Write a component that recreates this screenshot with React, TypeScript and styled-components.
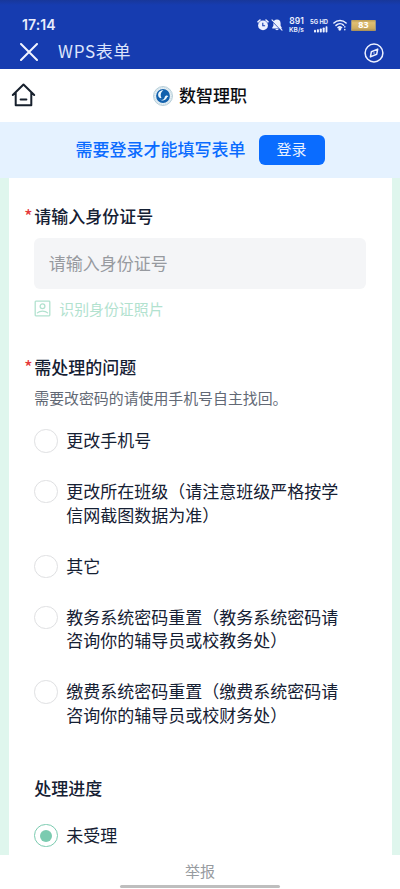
import React from "react";
import styled, { createGlobalStyle, css } from "styled-components";

const GlobalStyle = createGlobalStyle`
  *, *::before, *::after { box-sizing: border-box; }
  html, body { margin: 0; padding: 0; background: #fff; }
  body {
    font-family: "Noto Sans CJK SC", "Noto Sans", sans-serif;
    font-size: 17px;
    color: #152033;
    overflow: hidden;
  }
  h1, h2, p { margin: 0; font-weight: inherit; }
  button { font-family: inherit; border: 0; padding: 0; background: none; cursor: pointer; }
  svg { display: block; flex: none; }
`;

const Screen = styled.div`
  width: 400px;
  height: 889px;
  display: flex;
  flex-direction: column;
  background: #fff;
`;

const TopArea = styled.div`
  height: 69px;
  flex: none;
  color: #fff;
  background: linear-gradient(#18379a 0, #163cb0 5px, #163cb0 100%);
`;

const StatusBar = styled.div`
  height: 34px;
  padding: 15px 24px 0 22px;
  display: flex;
  justify-content: space-between;
`;

const Clock = styled.span`
  font: 600 14px/19px Inter, "Noto Sans", sans-serif;
  letter-spacing: 0.1px;
  color: #e9edfc;
`;

const StatusIcons = styled.div`
  display: flex;
  align-items: center;
  height: 20px;
  color: #edf1ff;
`;

const NetSpeed = styled.div`
  width: 17px;
  margin-left: 5px;
  display: flex;
  flex-direction: column;
  align-items: center;
  white-space: nowrap;
`;

const SpeedValue = styled.span`
  font: 600 8.500px/9px Inter, sans-serif;
`;

const SpeedUnit = styled.span`
  font: 600 6.500px/8px Inter, sans-serif;
`;

const Signal = styled.div`
  width: 18px;
  margin: 0 5px 0 5px;
  display: flex;
  flex-direction: column;
  align-items: flex-end;
  font: 700 5.800px/8px Inter, sans-serif;
  white-space: nowrap;
`;

const Battery = styled.div`
  width: 25px;
  height: 11px;
  margin-left: 4px;
  display: grid;
  place-items: center;
  border-radius: 1px;
  border: solid #9b9787;
  border-width: 0 1px;
  background: linear-gradient(#b99b55, #dfbf73 25%, #cfad60 75%, #a78e58);
  color: #fff;
  font: 700 9px/10px "Noto Sans", sans-serif;
`;

const AppBar = styled.header`
  height: 35px;
  padding: 0 16px 0 20px;
  display: flex;
  align-items: center;
`;

const AppTitle = styled.h1`
  flex: 1;
  margin: -1px 0 0 20px;
  font-size: 17px;
  line-height: 24px;
  letter-spacing: 0.7px;
  color: #dde5fc;
`;

const CompassButton = styled.button`
  color: #edf1ff;
  margin-top: 3px;
`;

const CloseButton = styled.button`
  color: #f1f4ff;
`;

const BrandBar = styled.div`
  height: 53px;
  flex: none;
  display: grid;
  grid-template-columns: 1fr auto 1fr;
  align-items: center;
  padding: 0 11px;
`;

const Brand = styled.div`
  display: flex;
  align-items: center;
  gap: 6px;
  font-weight: 500;
  line-height: 24px;
  color: #0b0d12;
`;

const BrandName = styled.span`
  margin-top: -2px;
`;

const LoginBanner = styled.div`
  height: 56px;
  flex: none;
  display: flex;
  align-items: center;
  justify-content: center;
  gap: 13px;
  background: #e5f2ff;
  color: #0a6bff;
  font-weight: 500;
  line-height: 24px;
`;

const LoginPrompt = styled.span`
  margin-top: -2px;
`;

const LoginButton = styled.button`
  width: 66px;
  height: 30px;
  border-radius: 6px;
  background: #0a6cff;
  color: #e9f2ff;
  font-size: 15px;
  line-height: 28px;
  padding-bottom: 2px;
`;

const FormArea = styled.main`
  height: 677px;
  flex: none;
  padding: 0 8.5px;
  background: #dff6ed;
  overflow: hidden;
`;

const FormCard = styled.div`
  height: 100%;
  padding: 26px 25.5px 0 25.8px;
  background: #fff;
`;

const Question = styled.section<{ $gap?: number }>`
  margin-top: ${(p) => p.$gap ?? 0}px;
`;

const QuestionTitle = styled.h2<{ $required?: boolean }>`
  font-size: 17px;
  line-height: 24px;
  font-weight: 500;
  ${(p) =>
    p.$required &&
    css`
      margin-left: -10px;
      &::before {
        content: "*";
        display: inline-block;
        width: 10px;
        color: #e5383b;
        font-weight: 500;
      }
    `}
`;

const IdInput = styled.input`
  display: block;
  width: 332px;
  height: 51px;
  margin-top: 10px;
  padding: 0 14.5px 2px;
  border: 0;
  border-radius: 6px;
  background: #f4f5f7;
  font: 400 17px/24px "Noto Sans CJK SC", sans-serif;
  &::placeholder { color: #979a9f; opacity: 1; }
`;

const ScanLink = styled.button`
  margin: 9px 0 0 0;
  display: flex;
  align-items: center;
  gap: 8px;
  color: #b2e2cf;
  font-size: 14.9px;
  line-height: 21px;
`;

const Hint = styled.p`
  margin-top: 8px;
  font-size: 14.9px;
  line-height: 21px;
  color: #626975;
`;

const OptionList = styled.div`
  display: flex;
  flex-direction: column;
  gap: 27.4px;
`;

const Option = styled.label`
  display: flex;
  align-items: flex-start;
  gap: 8.5px;
  line-height: 23.6px;
`;

const OptionText = styled.span`
  width: 276px;
  margin-top: -0.5px;
  margin-bottom: 0.5px;
  white-space: pre-line;
`;

const RadioMark = styled.span<{ $checked?: boolean }>`
  width: 23.5px;
  height: 23.5px;
  margin-top: 0.5px;
  margin-bottom: -0.5px;
  flex: none;
  display: grid;
  place-items: center;
  border-radius: 50%;
  border: 1px solid ${(p) => (p.$checked ? "#7bcbb0" : "#dfe0e2")};
  &::after {
    content: "";
    width: 12px;
    height: 12px;
    border-radius: 50%;
    background: ${(p) => (p.$checked ? "#7bcbb0" : "transparent")};
  }
`;

const Footer = styled.footer`
  flex: 1;
  display: flex;
  flex-direction: column;
  align-items: center;
  padding-top: 5px;
  font-size: 15px;
  line-height: 22px;
  color: #979b9f;
`;

const HomeIndicator = styled.div`
  width: 160px;
  height: 3px;
  margin-top: 3px;
  border-radius: 2px;
  background: #bebebe;
`;

const AlarmIcon = () => (
  <svg width="12" height="12" viewBox="0 0 12 12" fill="none">
    <path d="M1 2.8 3 1M11 2.8 9 1" stroke="currentColor" strokeWidth="1.6" strokeLinecap="round" />
    <circle cx="6" cy="6.4" r="4.9" fill="currentColor" />
    <path d="M5.8 3.8v3h2.3" stroke="#163cb0" strokeWidth="1.1" />
  </svg>
);

const MutedBell = styled.svg`
  margin-left: 2px;
`;

const MutedBellIcon = () => (
  <MutedBell width="12" height="12" viewBox="0 0 12 12" fill="none">
    <path d="M6 .6c-2.300 0-3.600 1.700-3.600 3.800v2.400L1.300 8.500v.9h9.400v-.9L9.600 6.800V4.400C9.600 2.300 8.300.6 6 .6ZM4.300 10.100c.5 1.500 2.900 1.500 3.400 0Z" fill="currentColor" />
    <path d="M.8 1.900 10 11.300" stroke="#163cb0" strokeWidth="1" />
    <path d="m1 .8 10 10.300" stroke="currentColor" strokeWidth="1.100" strokeLinecap="round" />
  </MutedBell>
);

const SignalBars = () => (
  <svg width="14" height="7" viewBox="0 0 14 7" fill="currentColor">
    <rect x="0" y="3.8" width="2" height="2.7" rx=".7" />
    <rect x="2.9" y="3.3" width="2" height="3.2" rx=".7" />
    <rect x="5.8" y="2.5" width="2" height="4" rx=".7" />
    <rect x="8.7" y="1.5" width="2" height="5" rx=".7" />
    <rect x="11.6" y=".3" width="1.8" height="6.2" rx=".7" />
  </svg>
);

const WifiIcon = () => (
  <svg width="14" height="12" viewBox="0 0 14 12" fill="none" stroke="currentColor" strokeWidth="1.5" strokeLinecap="round">
    <path d="M.9 4c3.5-3.3 8.7-3.3 12.2 0M3 6.4c2.3-2.1 5.6-2.1 7.6-.2M5 8.6c1.1-.9 2.5-.9 3.6 0" />
    <circle cx="6.8" cy="10.2" r=".7" fill="currentColor" />
    <path d="M11.8 7.8v.3M11.8 10.6v.2" />
  </svg>
);

const CloseIcon = () => (
  <svg width="18" height="18" viewBox="0 0 18 18" stroke="currentColor" strokeWidth="2" strokeLinecap="round">
    <path d="m1 1 16 16M17 1 1 17" />
  </svg>
);

const CompassIcon = () => (
  <svg width="20" height="20" viewBox="0 0 20 20" fill="none" stroke="currentColor" strokeWidth="1.500" strokeLinejoin="round">
    <circle cx="10" cy="10" r="8.900" />
    <path d="m13.700 6.100-1 5.200-6.300 2.600 1-5.200Z" />
    <circle cx="10" cy="10" r=".7" fill="currentColor" stroke="none" />
  </svg>
);

const HomeIcon = () => (
  <svg width="25" height="25" viewBox="0 0 25 25" fill="none" stroke="#17202d" strokeWidth="2" strokeLinecap="round" strokeLinejoin="round">
    <path d="M1.800 12 12.500 1.500 23.200 12M4.700 9.700v12.500h15.600V9.700M9.600 16.600h5.800" />
  </svg>
);

const SchoolLogo = () => (
  <svg width="20" height="20" viewBox="0 0 20 20">
    <circle cx="10" cy="10" r="9.5" fill="#e7f0f5" stroke="#9dbdcc" strokeWidth=".7" />
    <circle cx="10" cy="10" r="8.300" fill="none" stroke="#b9d0da" strokeWidth=".8" strokeDasharray="1 1" />
    <circle cx="10" cy="10" r="6.900" fill="#1261ad" />
    <path d="M10.500 4.300c-3.300-.2-5.800 2.300-5.300 5.100.3 1.900 1.800 3 3.300 2.700C7.200 9.600 7.500 6.100 10.500 4.300Z" fill="#edf7fd" />
    <path d="M7 13.600c2.100.9 3.600.1 4.300-1.300.5-1 .3-1.900 1.200-2.400.9-.6 2.300-.3 3 .5-1.200-.1-1.400.7-1.800 1.700-1.100 2.500-4.700 3.400-6.700 1.500Z" fill="#edf7fd" />
  </svg>
);

const IdPhotoIcon = () => (
  <svg width="17" height="17" viewBox="0 0 17 17" fill="none" stroke="currentColor" strokeWidth="1.300">
    <rect x="1.200" y="1.200" width="14.600" height="14.600" rx=".7" />
    <circle cx="8.500" cy="6.300" r="2.400" />
    <path d="M3.400 12.900c2.400-2.400 7.900-2.400 10.200 0" strokeLinecap="round" />
  </svg>
);

const ISSUES = [
  "更改手机号",
  "更改所在班级（请注意班级严格按学\n信网截图数据为准）",
  "其它",
  "教务系统密码重置（教务系统密码请\n咨询你的辅导员或校教务处）",
  "缴费系统密码重置（缴费系统密码请\n咨询你的辅导员或校财务处）",
];

const IssueOptions = styled(OptionList)`
  margin-top: 20.5px;
`;

const ProgressOptions = styled(OptionList)`
  margin-top: 23.5px;
`;

export default function App() {
  return (
    <Screen>
      <GlobalStyle />
      <TopArea>
        <StatusBar>
          <Clock>17:14</Clock>
          <StatusIcons>
            <AlarmIcon />
            <MutedBellIcon />
            <NetSpeed>
              <SpeedValue>891</SpeedValue>
              <SpeedUnit>KB/s</SpeedUnit>
            </NetSpeed>
            <Signal>
              5G HD
              <SignalBars />
            </Signal>
            <WifiIcon />
            <Battery>83</Battery>
          </StatusIcons>
        </StatusBar>
        <AppBar>
          <CloseButton aria-label="关闭"><CloseIcon /></CloseButton>
          <AppTitle>WPS表单</AppTitle>
          <CompassButton aria-label="浏览器"><CompassIcon /></CompassButton>
        </AppBar>
      </TopArea>
      <BrandBar>
        <HomeIcon />
        <Brand>
          <SchoolLogo />
          <BrandName>数智理职</BrandName>
        </Brand>
      </BrandBar>
      <LoginBanner>
        <LoginPrompt>需要登录才能填写表单</LoginPrompt>
        <LoginButton>登录</LoginButton>
      </LoginBanner>
      <FormArea>
        <FormCard>
          <Question>
            <QuestionTitle $required>请输入身份证号</QuestionTitle>
            <IdInput placeholder="请输入身份证号" />
            <ScanLink>
              <IdPhotoIcon />
              识别身份证照片
            </ScanLink>
          </Question>
          <Question $gap={36}>
            <QuestionTitle $required>需处理的问题</QuestionTitle>
            <Hint>需要改密码的请使用手机号自主找回。</Hint>
            <IssueOptions>
              {ISSUES.map((text) => (
                <Option key={text}>
                  <RadioMark />
                  <OptionText>{text}</OptionText>
                </Option>
              ))}
            </IssueOptions>
          </Question>
          <Question $gap={49}>
            <QuestionTitle>处理进度</QuestionTitle>
            <ProgressOptions>
              <Option>
                <RadioMark $checked />
                <OptionText>未受理</OptionText>
              </Option>
            </ProgressOptions>
          </Question>
        </FormCard>
      </FormArea>
      <Footer>
        举报
        <HomeIndicator />
      </Footer>
    </Screen>
  );
}
